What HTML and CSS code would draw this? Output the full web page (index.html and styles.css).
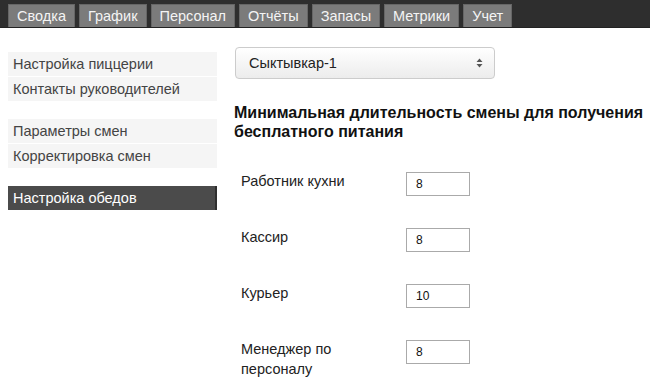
FILE: index.html
```html
<!DOCTYPE html>
<html lang="ru">
<head>
  <meta charset="UTF-8">
  <title>Настройка обедов</title>
  <link rel="stylesheet" href="styles.css">
</head>
<body>
  <div class="topbar">
    <a class="tab" href="#">Сводка</a>
    <a class="tab" href="#">График</a>
    <a class="tab" href="#">Персонал</a>
    <a class="tab" href="#">Отчёты</a>
    <a class="tab" href="#">Запасы</a>
    <a class="tab" href="#">Метрики</a>
    <a class="tab" href="#">Учет</a>
  </div>

  <div class="page">
    <div class="sidebar">
      <ul class="menu">
        <li><a href="#">Настройка пиццерии</a></li>
        <li><a href="#">Контакты руководителей</a></li>
      </ul>
      <ul class="menu">
        <li><a href="#">Параметры смен</a></li>
        <li><a href="#">Корректировка смен</a></li>
      </ul>
      <ul class="menu">
        <li class="active"><a href="#">Настройка обедов</a></li>
      </ul>
    </div>

    <div class="content">
      <div class="select-box">
        <span>Сыктывкар-1</span>
        <svg class="arrows" width="7" height="10" viewBox="0 0 7 10">
          <path d="M0.5 4 L3.5 0.5 L6.5 4 Z M0.5 6 L3.5 9.5 L6.5 6 Z" fill="#555"/>
        </svg>
      </div>

      <h2>Минимальная длительность смены для получения бесплатного питания</h2>

      <div class="rows">
        <div class="row">
          <label>Работник кухни</label>
          <input type="text" value="8">
        </div>
        <div class="row">
          <label>Кассир</label>
          <input type="text" value="8">
        </div>
        <div class="row">
          <label>Курьер</label>
          <input type="text" value="10">
        </div>
        <div class="row">
          <label>Менеджер по персоналу</label>
          <input type="text" value="8">
        </div>
      </div>
    </div>
  </div>
</body>
</html>
```

FILE: styles.css
```css
body {
  margin: 0;
  font-family: 'Liberation Sans', Arial, sans-serif;
  font-size: 14.5px;
  color: #222;
  background: #fff;
}
a {
  text-decoration: none;
}
.topbar {
  display: flex;
  gap: 4px;
  height: 28px;
  padding: 4px 0 0 8px;
  box-sizing: border-box;
  background: #2e2e2e;
  border-bottom: 1px solid #222;
}
.tab {
  display: block;
  padding: 0 8px;
  line-height: 23px;
  background: #7b7b7b;
  border: 1px solid #666;
  border-bottom: none;
  color: #f4f4f4;
}
.page {
  display: flex;
  padding: 0 0 0 8px;
}
.sidebar {
  flex-shrink: 0;
  width: 209px;
  padding-top: 24px;
}
.menu {
  list-style: none;
  margin: 0 0 18px 0;
  padding: 0;
}
.menu li {
  background: #f5f5f5;
  margin-bottom: 1px;
}
.menu li a {
  display: block;
  padding: 0 5px;
  line-height: 24px;
  color: #444;
}
.menu li.active {
  background: #4b4b4b;
  border-right: 2px solid #2f2f2f;
}
.menu li.active a {
  color: #fff;
}
.content {
  margin-left: 18px;
  padding-top: 19px;
}
.select-box {
  display: flex;
  align-items: center;
  justify-content: space-between;
  box-sizing: border-box;
  width: 260px;
  height: 32px;
  padding: 0 11px 0 13px;
  border: 1px solid #ccc;
  border-radius: 4px;
  background: linear-gradient(#fff, #ececec);
  color: #222;
}
h2 {
  margin: 24px 0 0 -1px;
  width: 420px;
  font-size: 16px;
  line-height: 19px;
  font-weight: bold;
  color: #111;
}
.rows {
  padding-top: 31px;
  padding-left: 6px;
}
.row {
  display: flex;
  align-items: flex-start;
  height: 56px;
}
.row label {
  width: 120px;
  margin-right: 45px;
  margin-top: -1px;
  line-height: 20px;
  color: #222;
}
.row input {
  box-sizing: border-box;
  width: 64px;
  height: 24px;
  padding: 0 9px;
  margin: 0;
  border: 1px solid #aaa;
  font-family: 'Liberation Sans', Arial, sans-serif;
  font-size: 12px;
  color: #111;
}
```
